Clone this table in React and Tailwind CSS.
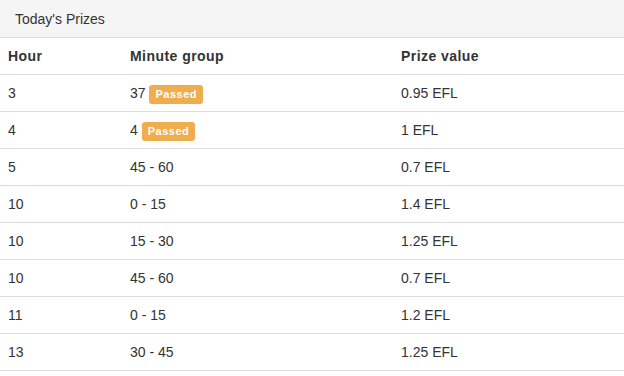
const prizes = [
  { hour: 3, group: "37", passed: true, value: "0.95 EFL" },
  { hour: 4, group: "4", passed: true, value: "1 EFL" },
  { hour: 5, group: "45 - 60", value: "0.7 EFL" },
  { hour: 10, group: "0 - 15", value: "1.4 EFL" },
  { hour: 10, group: "15 - 30", value: "1.25 EFL" },
  { hour: 10, group: "45 - 60", value: "0.7 EFL" },
  { hour: 11, group: "0 - 15", value: "1.2 EFL" },
  { hour: 13, group: "30 - 45", value: "1.25 EFL" },
];

export default function App() {
  return (
    <div
      className="w-[624px] h-[376px] bg-white text-[#333] text-[14px] leading-[20px] overflow-hidden"
      style={{ fontFamily: '"Liberation Sans", Arial, sans-serif' }}
    >
      {/* panel heading */}
      <div className="h-[38px] bg-[#f5f5f5] border-b border-[#ddd] px-[15px] py-[9px]">
        Today's Prizes
      </div>

      <table className="w-full table-fixed border-collapse">
        <colgroup>
          <col className="w-[122px]" />
          <col className="w-[271px]" />
          <col />
        </colgroup>
        <thead>
          <tr className="border-b border-[#ddd]">
            <th className="text-left font-bold tracking-[0.45px] px-[8px] py-[8px]">Hour</th>
            <th className="text-left font-bold tracking-[0.45px] px-[8px] py-[8px]">Minute group</th>
            <th className="text-left font-bold tracking-[0.45px] px-[8px] py-[8px]">Prize value</th>
          </tr>
        </thead>
        <tbody>
          {prizes.map((p, i) => (
            <tr key={i} className="border-b border-[#ddd]">
              <td className="h-[37px] px-[8px] py-[8px]">{p.hour}</td>
              <td className="h-[37px] px-[8px] py-[8px]">
                {p.group}
                {p.passed && (
                  <>
                    {" "}
                    <span className="relative top-[2px] inline-block align-top h-[19px] bg-[#f0ad4e] text-white text-[11px] font-bold tracking-[0.5px] leading-[19px] px-[6px] rounded-[3px]">
                      Passed
                    </span>
                  </>
                )}
              </td>
              <td className="h-[37px] px-[8px] py-[8px]">{p.value}</td>
            </tr>
          ))}
        </tbody>
      </table>
    </div>
  );
}
